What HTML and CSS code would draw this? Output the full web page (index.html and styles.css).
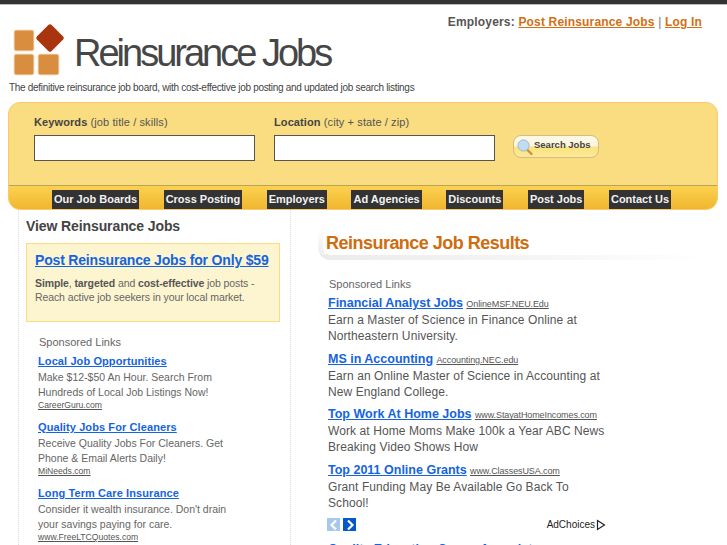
FILE: index.html
```html
<!DOCTYPE html>
<html lang="en">
<head>
<meta charset="utf-8">
<title>Reinsurance Jobs</title>
<link rel="stylesheet" href="styles.css">
</head>
<body>
<div class="topbar"></div>
<header class="header">
  <div class="brand">
    <svg class="logo" width="54" height="56" viewBox="0 0 54 56" aria-hidden="true">
      <g fill="#d98d3e" stroke="#f6e2c8" stroke-width="1">
      <rect x="2" y="8" width="20" height="21" rx="2"/>
      <rect x="2" y="32" width="20" height="21" rx="2"/>
      <rect x="26" y="32" width="21" height="21" rx="2"/>
      </g>
      <rect x="27.7" y="5.7" width="20.6" height="20.6" rx="2" fill="#a9350f" transform="rotate(45 38 16)"/>
    </svg>
    <div class="site-name">Reinsurance Jobs</div>
  </div>
  <div class="account"><b>Employers:</b> <a href="#">Post Reinsurance Jobs</a> <span>|</span> <a href="#">Log In</a></div>
</header>
<p class="tagline">The definitive reinsurance job board, with cost-effective job posting and updated job search listings</p>
<section class="panel">
  <form class="search">
    <label class="field"><span class="label"><b>Keywords</b> (job title / skills)</span><input type="text"></label>
    <label class="field"><span class="label"><b>Location</b> (city + state / zip)</span><input type="text"></label>
    <button class="go" type="button">
      <svg width="18" height="18" viewBox="0 0 18 18" aria-hidden="true"><path d="M10.5 11l5 5" stroke="#c98f45" stroke-width="2.4" stroke-linecap="round"/><circle cx="7.5" cy="7.5" r="5.6" fill="#bfdcf2" stroke="#9fb9cf"/></svg>
      <span>Search Jobs</span>
    </button>
  </form>
  <nav class="nav">
    <a href="#">Our Job Boards</a><a href="#">Cross Posting</a><a href="#">Employers</a><a href="#">Ad Agencies</a><a href="#">Discounts</a><a href="#">Post Jobs</a><a href="#">Contact Us</a>
  </nav>
</section>
<main class="columns">
  <aside class="side">
    <h2>View Reinsurance Jobs</h2>
    <div class="promo">
      <a class="promo-title" href="#">Post Reinsurance Jobs for Only $59</a>
      <p><b>Simple</b>, <b>targeted</b> and <b>cost-effective</b> job posts - Reach active job seekers in your local market.</p>
    </div>
    <div class="side-ads">
      <div class="sponsor">Sponsored Links</div>
      <div class="s-ad"><a class="s-t" href="#">Local Job Opportunities</a><p>Make $12-$50 An Hour. Search From Hundreds of Local Job Listings Now!</p><a class="s-u" href="#">CareerGuru.com</a></div>
      <div class="s-ad"><a class="s-t" href="#">Quality Jobs For Cleaners</a><p>Receive Quality Jobs For Cleaners. Get Phone &amp; Email Alerts Daily!</p><a class="s-u" href="#">MiNeeds.com</a></div>
      <div class="s-ad"><a class="s-t" href="#">Long Term Care Insurance</a><p>Consider it wealth insurance. Don't drain your savings paying for care.</p><a class="s-u" href="#">www.FreeLTCQuotes.com</a></div>
    </div>
  </aside>
  <section class="results">
    <div class="hd"><h1>Reinsurance Job Results</h1></div>
    <div class="ads">
      <div class="sponsor">Sponsored Links</div>
      <div class="ad"><a class="t" href="#">Financial Analyst Jobs</a> <a class="u" href="#">OnlineMSF.NEU.Edu</a><p>Earn a Master of Science in Finance Online at Northeastern University.</p></div>
      <div class="ad"><a class="t" href="#">MS in Accounting</a> <a class="u" href="#">Accounting.NEC.edu</a><p>Earn an Online Master of Science in Accounting at New England College.</p></div>
      <div class="ad"><a class="t" href="#">Top Work At Home Jobs</a> <a class="u" href="#">www.StayatHomeIncomes.com</a><p>Work at Home Moms Make 100k a Year ABC News Breaking Video Shows How</p></div>
      <div class="ad"><a class="t" href="#">Top 2011 Online Grants</a> <a class="u" href="#">www.ClassesUSA.com</a><p>Grant Funding May Be Available Go Back To School!</p></div>
      <div class="pager">
        <span class="arrow off"><svg width="12" height="12" viewBox="0 0 12 12"><path d="M8 1.5L3.5 6 8 10.5" fill="none" stroke="#fff" stroke-width="2.2"/></svg></span>
        <span class="arrow"><svg width="12" height="12" viewBox="0 0 12 12"><path d="M4 1.5L8.5 6 4 10.5" fill="none" stroke="#fff" stroke-width="2.2"/></svg></span>
        <span class="choices">AdChoices <svg width="10" height="12" viewBox="0 0 10 12"><path d="M1.5 1.5L8.5 6 1.5 10.5z" fill="none" stroke="#222" stroke-width="1.2"/></svg></span>
      </div>
      <div class="ad"><a class="t" href="#">Quality Education Career Associate</a></div>
    </div>
  </section>
</main>
</body>
</html>
```
FILE: styles.css
```css
html,body{margin:0;padding:0}
body{background:#fff;font-family:"Liberation Sans",Arial,sans-serif;color:#555;width:727px;height:545px;overflow:hidden}
p{margin:0}
a{color:#1464e0}
b{color:#444}
.topbar{height:4px;background:#333;border-bottom:1px solid #bbb}
.header{display:flex;justify-content:space-between;height:73px}
.brand{display:flex;align-items:flex-start;padding:17px 0 0 12px}
.logo{display:block}
.site-name{font-size:38px;line-height:44px;letter-spacing:-3px;color:#464646;margin:9px 0 0 8px;white-space:nowrap}
.account{font-size:12px;line-height:16px;letter-spacing:.17px;padding:9px 25px 0 0;color:#777}
.account b{color:#555}
.account a{color:#d26f14;font-weight:700}
.tagline{font-size:10px;line-height:12px;letter-spacing:-.3px;color:#444;margin-left:9px;height:17px;padding-top:4px}
.panel{margin:3px 0 0 8px;width:710px;height:108px;box-sizing:border-box;border:1px solid #fbc96c;border-radius:12px;background:#fadd80;display:flex;flex-direction:column;justify-content:space-between;overflow:hidden}
.search{display:flex;padding:12px 0 0 25px;align-items:flex-start}
.field{display:flex;flex-direction:column;margin-right:19px}
.label{font-size:11px;line-height:14px;letter-spacing:.1px;color:#555;margin-bottom:6px}
.field input{display:block;width:221px;height:26px;box-sizing:border-box;border:1px solid #555;background:#fff;margin:0;padding:0}
.go{display:flex;align-items:center;gap:0;width:86px;height:23px;margin:20px 0 0 -1px;padding:0 0 0 2px;border:1px solid #d3bd82;border-radius:8px;background:linear-gradient(#fdf9e8 0,#fdf6dc 48%,#fbe37f 52%,#fde998 100%);font:700 9.5px "Liberation Sans",Arial,sans-serif;color:#444;letter-spacing:0}
.go span{position:relative;top:-2px}
.nav{height:24px;box-sizing:border-box;border-top:1px solid #b9a25c;background:linear-gradient(#fcd250,#f0b62f);display:flex;align-items:flex-start;padding:4px 0 0 43px;gap:24.5px}
.nav a{display:block;height:19px;line-height:18px;padding:0 2px;background:#333;color:#f2f2f2;font-size:11px;font-weight:700;letter-spacing:0;text-decoration:none;white-space:nowrap}
.columns{display:flex;height:335px}
.side{width:273px;margin-left:18px;box-sizing:border-box;border:dotted #ddd;border-width:0 1px;padding:0 10px 0 7px}
.side h2{margin:0;font-size:14px;line-height:18px;letter-spacing:-.1px;color:#444;padding-top:7px;font-weight:700}
.promo{margin-top:8px;height:79px;box-sizing:border-box;border:1px solid #fbdc84;background:#fdf5d0;padding:7px 8px}
.promo-title{font-size:14px;line-height:18px;font-weight:700;letter-spacing:-.18px;white-space:nowrap}
.promo p{font-size:10.5px;line-height:14px;letter-spacing:-.1px;margin-top:7px;color:#666}
.promo b{color:#555}
.side-ads{padding:13px 0 0 12px}
.sponsor{font-size:11px;line-height:14px;letter-spacing:0;color:#666}
.side-ads .sponsor{padding-left:1px}
.s-ad{width:195px;margin-top:5px;padding-bottom:5px}
.s-t{font-size:11px;line-height:14px;font-weight:700;letter-spacing:.1px;display:block}
.s-ad p{font-size:10.5px;line-height:15px;margin-top:2px;color:#666}
.s-u{font-size:8.6px;line-height:10px;color:#555;display:block}
.results{margin-left:27px;width:400px}
.hd{margin-top:18px;height:32px;width:392px;border-radius:0 0 0 12px;background:linear-gradient(90deg,#ebebeb,#f6f6f6 60%,#fff) bottom/100% 6px no-repeat,linear-gradient(#fff,#eaeaea) left/6px 100% no-repeat}
.hd h1{margin:0 0 0 5px;height:27px;box-sizing:border-box;background:#fff;border-radius:0 0 0 8px;font-size:18px;line-height:30px;font-weight:700;color:#cf6c0c;letter-spacing:-.52px;padding-left:3px;white-space:nowrap}
.ads{padding:17px 0 0 10px;width:280px}
.ads .sponsor{padding-left:1px;margin-bottom:4px}
.ad{margin-bottom:6.7px;font-size:12px;line-height:17px}
.t{font-size:12.5px;line-height:17px;font-weight:700}
.u{font-size:9px;line-height:12px;color:#555;letter-spacing:-.1px}
.ad p{font-size:12px;line-height:16px;letter-spacing:.09px;color:#555}
.pager{display:flex;align-items:center;gap:3px;height:14px;margin:1px 0 9px -1px}
.arrow{width:13px;height:13px;background:#0558c8;display:flex;align-items:center;justify-content:center}
.arrow.off{background:#a6c8ef}
.choices{margin-left:auto;margin-right:2px;font-size:10px;color:#222;display:flex;align-items:center;gap:1px}
```
